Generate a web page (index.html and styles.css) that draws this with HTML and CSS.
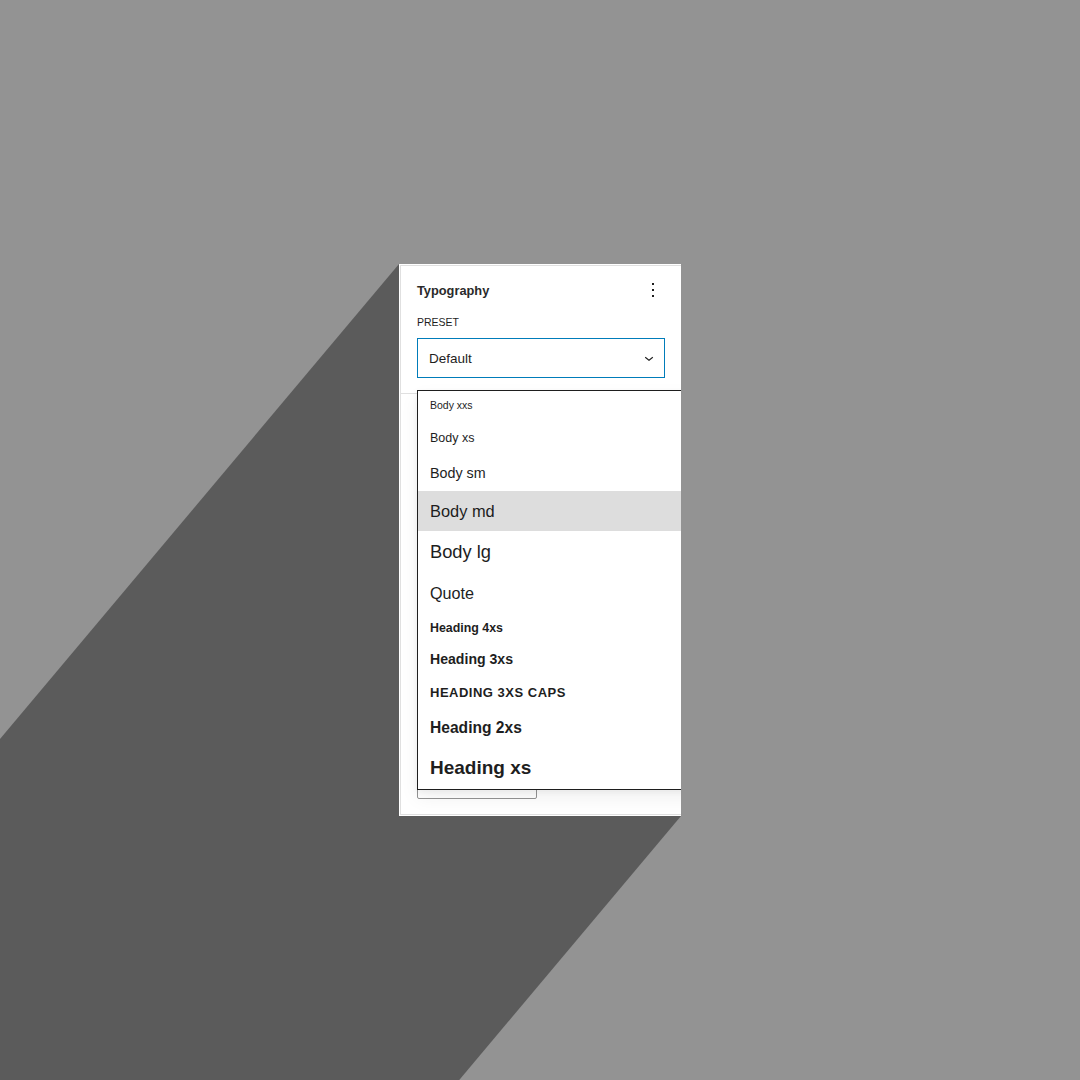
FILE: index.html
```html
<!DOCTYPE html>
<html lang="en">
<head>
<meta charset="utf-8">
<title>Typography</title>
<link rel="stylesheet" href="styles.css">
</head>
<body>
<div class="stage">
  <svg class="long-shadow" width="1080" height="1080" viewBox="0 0 1080 1080" aria-hidden="true">
    <polygon points="399,264 681,264 681,816 -159,1816 -441,1264" fill="#5b5b5b"/>
  </svg>
  <div class="frame">
    <div class="panel">
      <section class="panel-section">
        <div class="panel-header">
          <h2 class="panel-title">Typography</h2>
          <svg class="more-icon" width="24" height="24" viewBox="0 0 24 24" aria-hidden="true">
            <path d="M13 19h-2v-2h2v2zm0-6h-2v-2h2v2zm0-6h-2V5h2v2z" fill="#1e1e1e"/>
          </svg>
        </div>
        <div class="field-label">Preset</div>
        <div class="select">
          <span class="select-value">Default</span>
          <svg class="chevron" width="18" height="18" viewBox="0 0 24 24" aria-hidden="true">
            <path d="M17.5 11.6L12 16l-5.5-4.4.9-1.2L12 14l4.6-3.6 1 1.2z" fill="#1e1e1e"/>
          </svg>
        </div>
      </section>
      <section class="panel-section-lower">
        <div class="ghost-button"></div>
      </section>
      <ul class="dropdown">
        <li class="opt body-xxs">Body xxs</li>
        <li class="opt body-xs">Body xs</li>
        <li class="opt body-sm">Body sm</li>
        <li class="opt body-md is-active">Body md</li>
        <li class="opt body-lg">Body lg</li>
        <li class="opt quote">Quote</li>
        <li class="opt h-4xs">Heading 4xs</li>
        <li class="opt h-3xs">Heading 3xs</li>
        <li class="opt h-caps">Heading 3xs caps</li>
        <li class="opt h-2xs">Heading 2xs</li>
        <li class="opt h-xs">Heading xs</li>
      </ul>
    </div>
  </div>
</div>
</body>
</html>
```
FILE: styles.css
```css
* { box-sizing: border-box; }

html, body {
  margin: 0;
  padding: 0;
}

body {
  background: #939393;
  font-family: "Liberation Sans", Arial, sans-serif;
  color: #1e1e1e;
}

.stage {
  position: relative;
  width: 1080px;
  height: 1080px;
  overflow: hidden;
  background: #939393;
}

.long-shadow {
  position: absolute;
  left: 0;
  top: 0;
}

.frame {
  position: absolute;
  left: 399px;
  top: 264px;
  width: 282px;
  height: 552px;
  background: #fff;
  padding: 1px 0 1px 1px;
}

.panel {
  position: relative;
  height: 100%;
  border: 1px solid #e0e0e0;
  border-right: 0;
  overflow: hidden;
  display: flex;
  flex-direction: column;
}

.panel-section {
  padding: 0 16px 15px;
  border-bottom: 1px solid #e0e0e0;
}

.panel-header {
  height: 48px;
  display: flex;
  align-items: center;
  justify-content: space-between;
}

.panel-title {
  margin: 0;
  padding-top: 2px;
  font-size: 12.8px;
  font-weight: 700;
  line-height: 16px;
  color: #2a2a2a;
}

.more-icon {
  display: block;
}

.field-label {
  font-size: 10.5px;
  line-height: 16px;
  text-transform: uppercase;
  color: #1e1e1e;
  margin-bottom: 8px;
}

.select {
  height: 40px;
  border: 1px solid #007cba;
  display: flex;
  align-items: center;
  justify-content: space-between;
  padding: 0 6px 0 11px;
}

.select-value {
  padding-top: 2px;
  font-size: 13.5px;
  line-height: 16px;
}

.chevron {
  display: block;
}

.panel-section-lower {
  flex: 1;
  display: flex;
  flex-direction: column;
  justify-content: flex-end;
  padding: 16px 16px 15px;
}

.ghost-button {
  width: 120px;
  height: 32px;
  border: 1px solid #949494;
  border-radius: 2px;
}

.dropdown {
  position: absolute;
  top: 124px;
  left: 16px;
  width: 300px;
  margin: 0;
  padding: 0 0 2px;
  list-style: none;
  background: #fff;
  border: 1px solid #1e1e1e;
  box-shadow: 0 2px 6px rgba(0, 0, 0, 0.05), 0 8px 18px rgba(0, 0, 0, 0.06);
}

.opt {
  padding: 8px 12px;
  white-space: nowrap;
  color: #1e1e1e;
}

.opt.is-active {
  background: #dddddd;
}

.nudge { padding-top: 9px; padding-bottom: 7px; }

.body-xxs { font-size: 10.5px; line-height: 12px; }
.body-xs  { font-size: 12.5px; line-height: 20px; padding-top: 9px; padding-bottom: 7px; }
.body-sm  { font-size: 14.3px; line-height: 20px; }
.body-md  { font-size: 16.4px; line-height: 24px; }
.body-lg  { font-size: 18.3px; line-height: 26px; }
.quote    { font-size: 16.2px; line-height: 24px; }
.h-4xs    { font-size: 12.4px; line-height: 12px; font-weight: 700; padding-top: 9px; padding-bottom: 7px; }
.h-3xs    { font-size: 14.1px; line-height: 20px; font-weight: 700; }
.h-caps   { font-size: 13px; line-height: 14px; font-weight: 700; text-transform: uppercase; letter-spacing: 0.5px; padding-top: 9px; padding-bottom: 7px; }
.h-2xs    { font-size: 15.6px; line-height: 24px; font-weight: 700; padding-top: 9px; padding-bottom: 7px; }
.h-xs     { font-size: 19px; line-height: 24px; font-weight: 700; padding-top: 9px; padding-bottom: 7px; }
```
